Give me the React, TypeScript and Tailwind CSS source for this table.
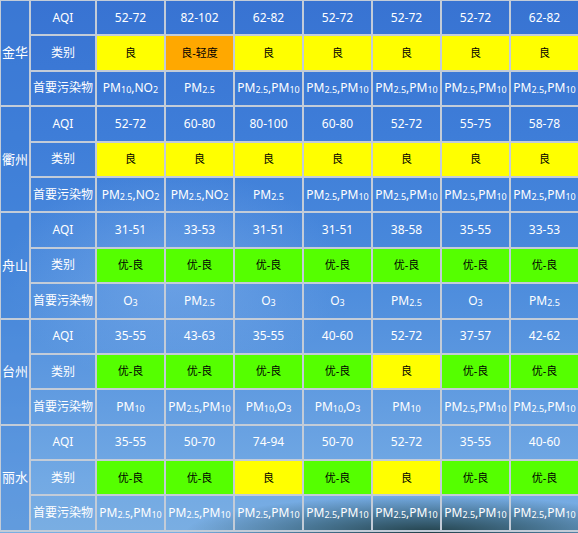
import React from "react";

type Cat = "good" | "light" | "fine";

type Group = {
  city: string;
  aqi: string[];
  cat: Cat[];
  pol: string[];
};

const groups: Group[] = [
  {
    city: "金华",
    aqi: ["52-72", "82-102", "62-82", "52-72", "52-72", "52-72", "62-82"],
    cat: ["good", "light", "good", "good", "good", "good", "good"],
    pol: ["PM10,NO2", "PM2.5", "PM2.5,PM10", "PM2.5,PM10", "PM2.5,PM10", "PM2.5,PM10", "PM2.5,PM10"],
  },
  {
    city: "衢州",
    aqi: ["52-72", "60-80", "80-100", "60-80", "52-72", "55-75", "58-78"],
    cat: ["good", "good", "good", "good", "good", "good", "good"],
    pol: ["PM2.5,NO2", "PM2.5,NO2", "PM2.5", "PM2.5,PM10", "PM2.5,PM10", "PM2.5,PM10", "PM2.5,PM10"],
  },
  {
    city: "舟山",
    aqi: ["31-51", "33-53", "31-51", "31-51", "38-58", "35-55", "33-53"],
    cat: ["fine", "fine", "fine", "fine", "fine", "fine", "fine"],
    pol: ["O3", "PM2.5", "O3", "O3", "PM2.5", "O3", "PM2.5"],
  },
  {
    city: "台州",
    aqi: ["35-55", "43-63", "35-55", "40-60", "52-72", "37-57", "42-62"],
    cat: ["fine", "fine", "fine", "fine", "good", "fine", "fine"],
    pol: ["PM10", "PM2.5,PM10", "PM10,O3", "PM10,O3", "PM10", "PM2.5,PM10", "PM2.5,PM10"],
  },
  {
    city: "丽水",
    aqi: ["35-55", "50-70", "74-94", "50-70", "52-72", "35-55", "40-60"],
    cat: ["fine", "fine", "good", "fine", "good", "fine", "fine"],
    pol: ["PM2.5,PM10", "PM2.5,PM10", "PM2.5,PM10", "PM2.5,PM10", "PM2.5,PM10", "PM2.5,PM10", "PM2.5,PM10"],
  },
];

const catLabel: Record<Cat, string> = { good: "良", light: "良-轻度", fine: "优-良" };
const catClass: Record<Cat, string> = {
  good: "bg-[#ffff00]",
  light: "bg-[#ffa800]",
  fine: "bg-[#55ff00]",
};

// "PM2.5,NO2" -> PM + small 2.5 , NO + small 2
function Pollutant({ text }: { text: string }) {
  const parts = text.split(",");
  return (
    <>
      {parts.map((p, i) => {
        const m = p.match(/^([A-Z]+)([\d.]+)$/);
        return (
          <React.Fragment key={i}>
            {i > 0 && ","}
            {m ? (
              <>
                {m[1]}
                <span className="text-[9px] relative top-[1px]">{m[2]}</span>
              </>
            ) : (
              p
            )}
          </React.Fragment>
        );
      })}
    </>
  );
}

const td = "border-2 border-[#c3ccd8] text-center align-middle p-0";

export default function App() {
  return (
    <div className="w-[578px] h-[533px] overflow-hidden bg-[radial-gradient(ellipse_42%_7%_at_74%_100%,rgba(24,52,56,0.9)_0%,rgba(40,80,95,0.6)_50%,transparent_100%),radial-gradient(ellipse_30%_20%_at_30%_52%,rgba(150,190,240,0.4)_0%,transparent_100%),linear-gradient(180deg,#3873d2_0%,#3e7dd8_25%,#4a8adc_50%,#5f9ae0_72%,#72a9e4_90%,#7aaee2_100%)] font-['Noto_Sans','Noto_Sans_CJK_SC',sans-serif] text-[12px] text-white">
      <table className="w-[580px] table-fixed border-collapse -mt-[1px] -ml-[1px]">
        <colgroup>
          <col className="w-[30px]" />
          <col className="w-[66px]" />
          {[0, 1, 2, 3, 4, 5, 6].map((i) => (
            <col key={i} className="w-[69px]" />
          ))}
        </colgroup>
        <tbody>
          {groups.map((g) => (
            <React.Fragment key={g.city}>
              <tr className="h-[35.4px]">
                <td rowSpan={3} className={`${td} bg-[#3f7fd6]/40 text-[13px]`}>
                  {g.city}
                </td>
                <td className={td}>AQI</td>
                {g.aqi.map((a, i) => (
                  <td key={i} className={td}>
                    {a}
                  </td>
                ))}
              </tr>
              <tr className="h-[35.4px]">
                <td className={td}>类别</td>
                {g.cat.map((c, i) => (
                  <td key={i} className={`${td} ${catClass[c]} text-black text-[11px]`}>
                    {catLabel[c]}
                  </td>
                ))}
              </tr>
              <tr className="h-[35.4px]">
                <td className={td}>首要污染物</td>
                {g.pol.map((p, i) => (
                  <td key={i} className={`${td} whitespace-nowrap`}>
                    <Pollutant text={p} />
                  </td>
                ))}
              </tr>
            </React.Fragment>
          ))}
        </tbody>
      </table>
    </div>
  );
}
